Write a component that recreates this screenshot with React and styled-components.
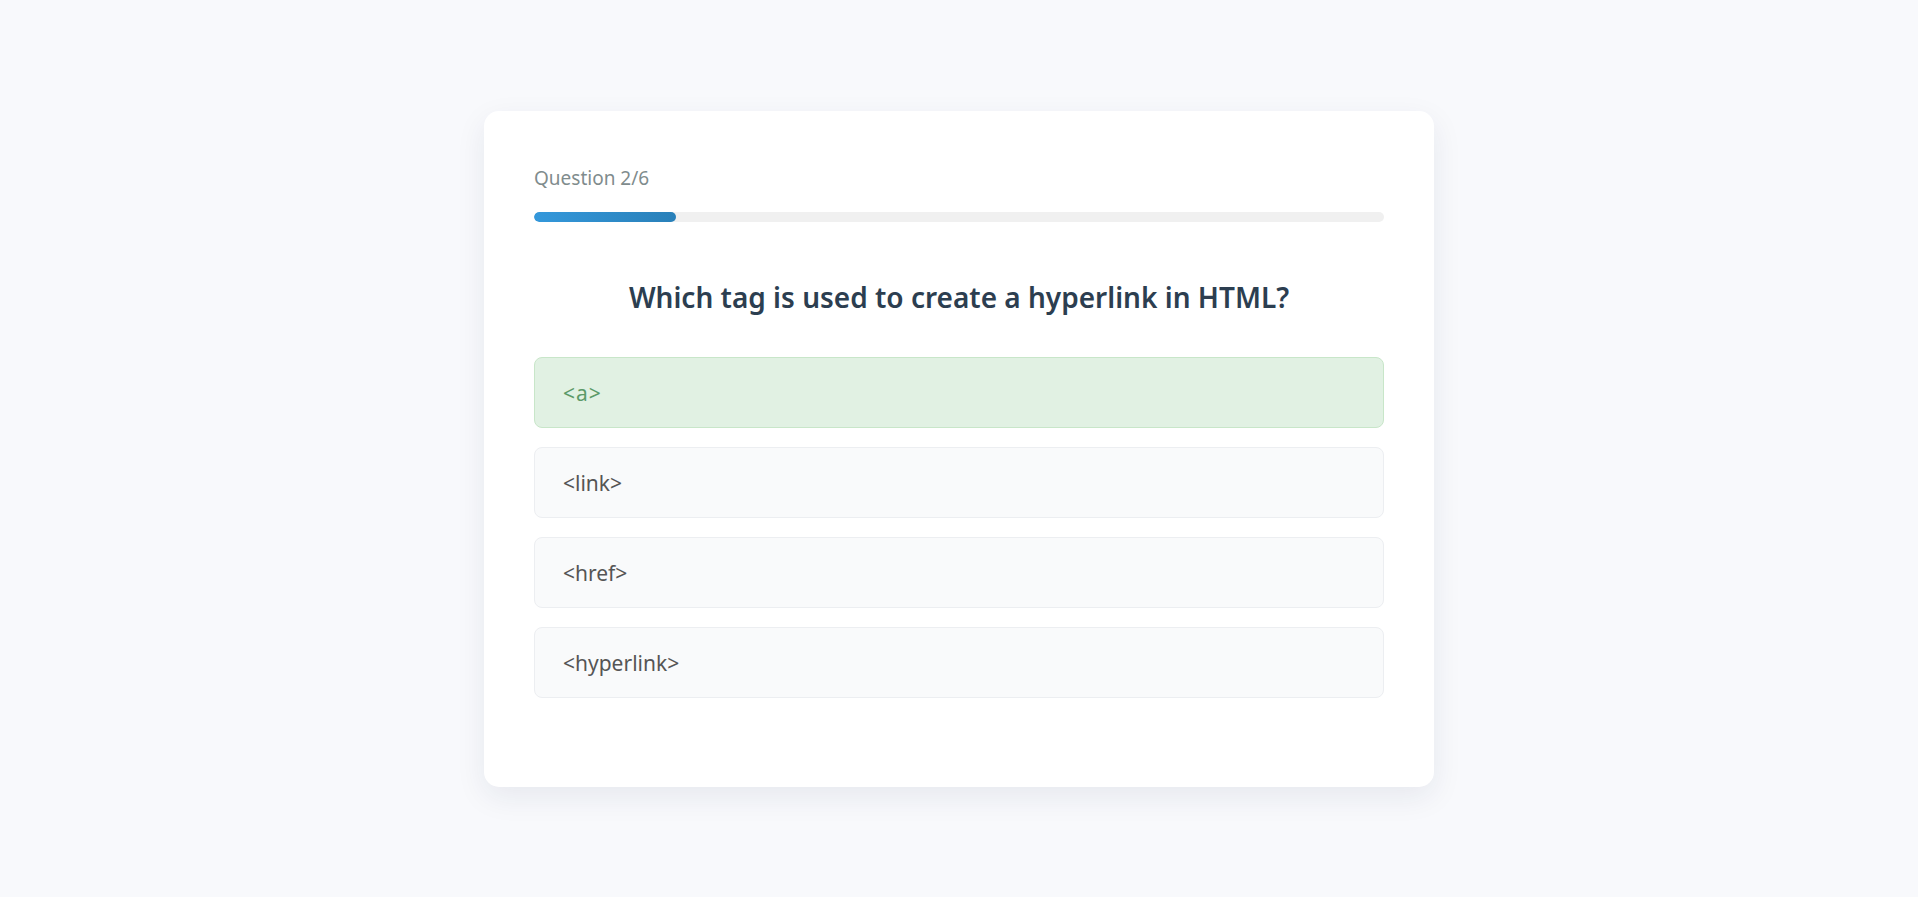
import React from "react";
import styled, { createGlobalStyle } from "styled-components";

const GlobalStyle = createGlobalStyle`
  * { box-sizing: border-box; }
  html, body { margin: 0; padding: 0; }
  body {
    background: #f8f9fc;
    font-family: "Noto Sans", "Open Sans", sans-serif;
  }
`;

const Page = styled.div`
  min-height: 897px;
  display: flex;
  align-items: center;
  justify-content: center;
`;

const Card = styled.div`
  width: 950px;
  height: 676px;
  background: #ffffff;
  border-radius: 15px;
  box-shadow: 0 10px 30px rgba(30, 40, 80, 0.08);
  padding: 50px;
`;

const Label = styled.div`
  font-size: 19px;
  line-height: 27px;
  color: #7f8c8d;
  margin: 4px 0 20px;
`;

const Track = styled.div`
  height: 10px;
  border-radius: 5px;
  background: #f0f0f0;
  overflow: hidden;
`;

const Fill = styled.div`
  height: 100%;
  border-radius: 5px;
  background: linear-gradient(90deg, #3498db, #2980b9);
`;

const Heading = styled.h2`
  margin: 57px 0 42px;
  font-size: 28px;
  line-height: 36px;
  font-weight: 600;
  color: #2c3e50;
  text-align: center;
`;

const Options = styled.div`
  display: flex;
  flex-direction: column;
  gap: 19px;
`;

const Option = styled.div`
  height: 71px;
  display: flex;
  align-items: center;
  padding: 2px 28px 0;
  border-radius: 8px;
  font-size: 21px;
  border: 1px solid ${(p) => (p.$correct ? "#c8e6c9" : "#eceef1")};
  background: ${(p) => (p.$correct ? "#e1f1e3" : "#f9fafb")};
  color: ${(p) => (p.$correct ? "#5b9a68" : "#555555")};
  letter-spacing: ${(p) => (p.$correct ? "1px" : "0")};
`;

const options = ["<a>", "<link>", "<href>", "<hyperlink>"];

export default function App() {
  const current = 2;
  const total = 6;
  return (
    <>
      <GlobalStyle />
      <Page>
        <Card>
          <Label>
            Question {current}/{total}
          </Label>
          <Track>
            <Fill style={{ width: `${((current - 1) / total) * 100}%` }} />
          </Track>
          <Heading>Which tag is used to create a hyperlink in HTML?</Heading>
          <Options>
            {options.map((o, i) => (
              <Option key={o} $correct={i === 0}>
                {o}
              </Option>
            ))}
          </Options>
        </Card>
      </Page>
    </>
  );
}
